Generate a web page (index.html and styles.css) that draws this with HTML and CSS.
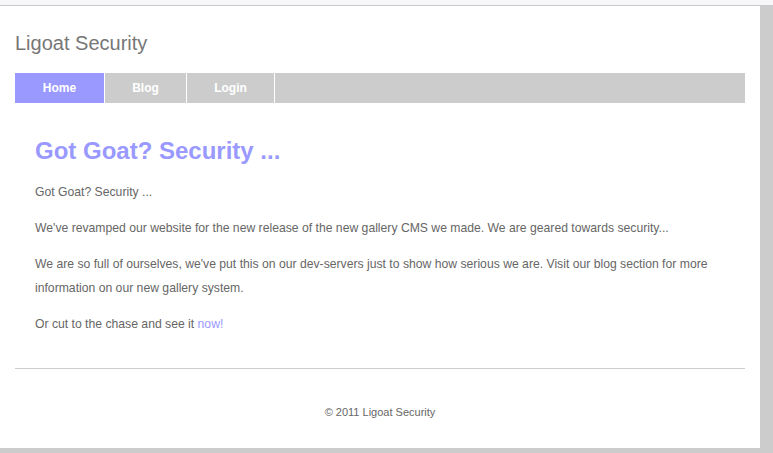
FILE: index.html
```html
<!DOCTYPE html>
<html>
<head>
<meta charset="utf-8">
<title>Ligoat Security</title>
<link rel="stylesheet" href="styles.css">
</head>
<body>
<div class="topbar"></div>
<div class="page">
  <div class="header">Ligoat Security</div>
  <ul class="nav">
    <li class="active"><a href="#">Home</a></li>
    <li><a href="#">Blog</a></li>
    <li><a href="#">Login</a></li>
  </ul>
  <div class="content">
    <h1>Got Goat? Security ...</h1>
    <p>Got Goat? Security ...</p>
    <p>We've revamped our website for the new release of the new gallery CMS we made. We are geared towards security...</p>
    <p>We are so full of ourselves, we've put this on our dev-servers just to show how serious we are. Visit our blog section for more information on our new gallery system.</p>
    <p>Or cut to the chase and see it <a href="#">now!</a></p>
  </div>
  <div class="footer">© 2011 Ligoat Security</div>
</div>
</body>
</html>
```
FILE: styles.css
```css
html, body {
  margin: 0;
  padding: 0;
}
body {
  background: #cccccc;
  font-family: "Liberation Sans", Arial, sans-serif;
  height: 453px;
  overflow: hidden;
}
.topbar {
  height: 5px;
  background: #f7f7f9;
  border-bottom: 1px solid #c8c8c8;
}
.page {
  width: 760px;
  height: 442px;
  background: #ffffff;
  padding: 0 15px;
  box-sizing: border-box;
}
.header {
  font-size: 20px;
  color: #777777;
  line-height: 24px;
  padding-top: 25px;
  height: 42px;
}
.nav {
  display: flex;
  list-style: none;
  margin: 0;
  padding: 0;
  height: 30px;
  background: #cccccc;
}
.nav li {
  border-right: 1px solid #ffffff;
}
.nav li a {
  display: block;
  height: 30px;
  box-sizing: border-box;
  padding-top: 1px;
  line-height: 29px;
  color: #ffffff;
  font-weight: bold;
  font-size: 12px;
  text-decoration: none;
  text-align: center;
}
.nav li:nth-child(1) a { width: 89px; }
.nav li:nth-child(2) a { width: 81px; }
.nav li:nth-child(3) a { width: 87px; }
.nav li.active a {
  background: #9999ff;
}
.content {
  padding: 32px 20px 0 20px;
  height: 233px;
  border-bottom: 1px solid #cccccc;
}
.content h1 {
  margin: 0 0 13px 0;
  font-size: 24px;
  line-height: 32px;
  color: #9999ff;
  font-weight: bold;
}
.content p {
  margin: 0 0 12px 0;
  font-size: 12.2px;
  line-height: 24px;
  color: #666666;
}
.content a {
  color: #9999ff;
  text-decoration: none;
}
.footer {
  text-align: center;
  font-size: 11px;
  color: #666666;
  padding-top: 35px;
  line-height: 16px;
}
```
